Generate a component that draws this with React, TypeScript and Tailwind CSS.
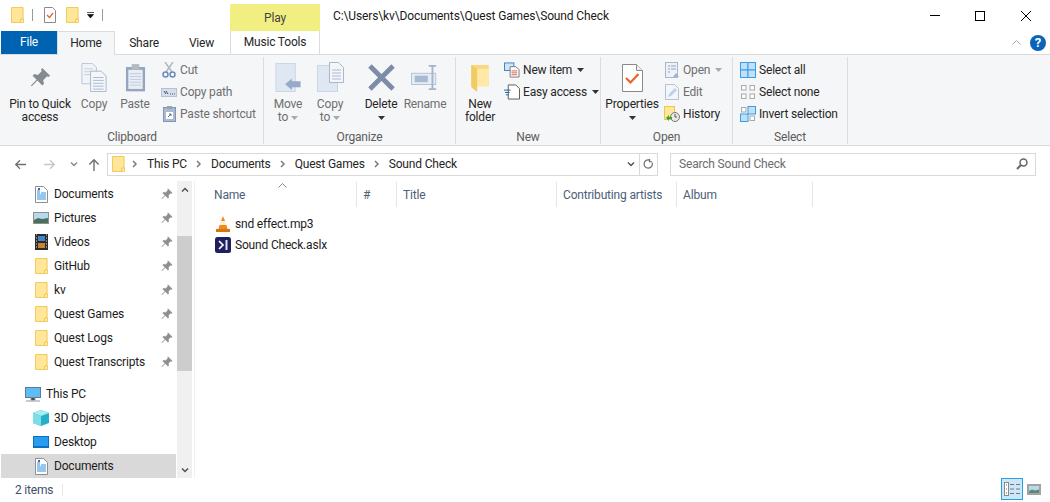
import type { ReactNode } from 'react';

function Folder({ className = 'w-[14px] h-[17px]' }: { className?: string }) {
  return (
    <svg viewBox="0 0 14 17" className={`shrink-0 ${className}`}>
      <path d="M.5.5h12.500v12.500h-2.500v3.500H.5z" fill="#ffe698" stroke="#eec64f" />
      <path d="M10.500 16.500v-3.500h3v3.500z" fill="#fff3c4" stroke="#eec64f" />
    </svg>
  );
}

function Pin({ className = 'w-[12px] h-[12px]', color = '#8d9093' }: { className?: string; color?: string }) {
  return (
    <svg viewBox="0 0 24 24" className={`shrink-0 ${className}`}>
      <path d="M14 1l9 9-2 1.500-1.500-1L15 15l1 4-2 2-5.500-5.500L2 22l-1-1 6.500-6.500L3 10l2-2 4 1 4.500-4.500-1-1.500z" fill={color} />
    </svg>
  );
}

function DocLines({ className = 'w-[13px] h-[17px]' }: { className?: string }) {
  return (
    <svg viewBox="0 0 13 17" className={`shrink-0 ${className}`}>
      <path d="M.5.5h8l4 4v12H.500z" fill="#fff" stroke="#8e8e8e" />
      <path d="M2 5h3M2 7h3M6 7h5M2 9h9M2 11h9M2 13h9" stroke="#2f8fe0" />
      <path d="M3 2h2v2H3z" fill="#2f6fb0" />
    </svg>
  );
}

function Chevron({ dir = 'right', color = '#7b7b7b' }: { dir?: 'right' | 'down' | 'up'; color?: string }) {
  const d = dir === 'right' ? 'M2 1l3 3-3 3' : dir === 'down' ? 'M1 2.500l3 3 3-3' : 'M1 5.500l3-3 3 3';
  return (
    <svg viewBox="0 0 8 8" className="w-[8px] h-[8px] shrink-0">
      <path d={d} fill="none" stroke={color} strokeWidth="1.500" />
    </svg>
  );
}

function Caret({ color = '#444' }: { color?: string }) {
  return (
    <svg viewBox="0 0 7 4" className="w-[7px] h-[4px] shrink-0">
      <path d="M0 0h7L3.500 4z" fill={color} />
    </svg>
  );
}

function BigButton({ icon, label, sub, disabled, caret, width }: { icon: ReactNode; label: string; sub?: ReactNode; disabled?: boolean; caret?: boolean; width: string }) {
  return (
    <div className={`flex flex-col items-center shrink-0 ${width} ${disabled ? 'text-[#6f6f6f]' : 'text-[#262626]'}`}>
      <div className="h-[35px] flex items-end justify-center">{icon}</div>
      <div className="mt-[6px] h-[13px] leading-[13px] whitespace-nowrap">{label}</div>
      {sub && <div className="h-[13px] leading-[13px] whitespace-nowrap flex items-center gap-[3px] justify-center">{sub}</div>}
      {caret && <div className="h-[13px] flex items-center justify-center"><Caret color="#333" /></div>}
    </div>
  );
}

function SmallButton({ icon, label, disabled, caret }: { icon: ReactNode; label: string; disabled?: boolean; caret?: boolean }) {
  return (
    <div className={`h-[22px] flex items-center whitespace-nowrap ${disabled ? 'text-[#6f6f6f]' : 'text-[#262626]'}`}>
      <span className="w-[16px] h-[16px] flex items-center justify-center shrink-0 mr-[3px]">{icon}</span>
      {label}
      {caret && <span className="ml-[5px] flex"><Caret color={disabled ? '#aaa' : '#333'} /></span>}
    </div>
  );
}

function Group({ label, width, children }: { label: string; width: string; children: ReactNode }) {
  return (
    <div className={`shrink-0 flex flex-col h-[87px] mt-[2px] border-r border-[#dcdddf] ${width}`}>
      <div className="flex flex-1 min-h-0">{children}</div>
      <div className="h-[16px] leading-[18px] text-center text-[#5c5c5c]">{label}</div>
    </div>
  );
}

function Grid4({ on }: { on: number[] }) {
  return (
    <svg viewBox="0 0 16 16" className="w-[16px] h-[16px]">
      {[[0, 0], [1, 0], [0, 1], [1, 1]].map(([c, r], i) =>
        on.includes(i) ? (
          <rect key={i} x={c * 7.500 + 0.500} y={r * 7.500 + 0.500} width="7.500" height="7.500" fill="#bfe0f8" stroke="#3a9ce6" />
        ) : (
          <rect key={i} x={c * 8.500 + 1.500} y={r * 8.500 + 1.500} width="4.500" height="4.500" fill="#fff" stroke="#a8a8a8" />
        )
      )}
    </svg>
  );
}

function Ribbon() {
  return (
    <div className="h-[92px] bg-[#f5f6f7] border-y border-[#dadbdc] flex pl-[1px] text-[#262626]">
      <Group label="Clipboard" width="w-[263px]">
        <BigButton
          width="w-[78px]"
          label="Pin to Quick"
          sub="access"
          icon={<Pin className="w-[21px] h-[21px] mb-[4px]" color="#868b90" />}
        />
        <BigButton
          width="w-[30px]"
          disabled
          label="Copy"
          icon={
            <svg viewBox="0 0 26 30" className="w-[26px] h-[29px]">
              <path d="M.5.5h11l4 4v17H.5z" fill="#f0f3f8" stroke="#bac6d8" />
              <path d="M3 6h9M3 9h9M3 12h9" stroke="#c3cede" />
              <path d="M9.500 8.500h11l5 5v16h-16z" fill="#f4f6fa" stroke="#aab8cc" />
              <path d="M12 15h11M12 18h11M12 21h11M12 24h11M12 27h11" stroke="#a9bad2" />
            </svg>
          }
        />
        <BigButton
          width="w-[52px]"
          disabled
          label="Paste"
          icon={
            <svg viewBox="0 0 22 30" className="w-[21px] h-[29px]">
              <rect x="1" y="4" width="20" height="25.500" fill="#95a6bf" />
              <rect x="3.500" y="7" width="15" height="20" fill="#e9eef6" />
              <path d="M5 11h12M5 14h12M5 17h12M5 20h12M5 23h12" stroke="#c0cbdc" />
              <rect x="7" y="1" width="8" height="6" fill="#b4b9c0" />
            </svg>
          }
        />
        <div className="flex flex-col pt-[2px]">
          <SmallButton
            disabled
            label="Cut"
            icon={
              <svg viewBox="0 0 14 16" className="w-[14px] h-[16px]">
                <path d="M3 0l7 10M11 0L4 10" stroke="#b2b8c0" strokeWidth="1.500" />
                <circle cx="3.500" cy="12.500" r="2.500" fill="none" stroke="#6f8cb8" strokeWidth="1.500" />
                <circle cx="10.500" cy="12.500" r="2.500" fill="none" stroke="#6f8cb8" strokeWidth="1.500" />
              </svg>
            }
          />
          <SmallButton
            disabled
            label="Copy path"
            icon={
              <svg viewBox="0 0 16 9" className="w-[16px] h-[9px]">
                <rect x=".5" y=".5" width="15" height="8" fill="#d5deec" stroke="#b6c2d4" />
                <path d="M3 3l2 3M5 3l2 3M9 6h1M11 6h1M13 6h1" stroke="#4a5666" />
              </svg>
            }
          />
          <SmallButton
            disabled
            label="Paste shortcut"
            icon={
              <svg viewBox="0 0 13 16" className="w-[13px] h-[16px]">
                <rect x=".5" y="1.500" width="12" height="14" fill="#a9bad2" stroke="#8294ae" />
                <rect x="4" y="0" width="5" height="3" fill="#9aa2ad" />
                <path d="M3 6h7v7H3z" fill="#fff" />
                <path d="M5 11l3-3M6 8h2v2" stroke="#5b6a80" fill="none" />
              </svg>
            }
          />
        </div>
      </Group>
      <Group label="Organize" width="w-[192px]">
        <BigButton
          width="w-[48px]"
          disabled
          label="Move"
          sub={<>to <Caret color="#aaa" /></>}
          icon={
            <svg viewBox="0 0 27 30" className="w-[27px] h-[29px]">
              <rect x=".5" y=".5" width="20" height="29" fill="#dfe7f2" stroke="#cbd6e6" />
              <path d="M10 22l7-6v3h9v6h-9v3z" fill="#97abc9" />
            </svg>
          }
        />
        <BigButton
          width="w-[36px]"
          disabled
          label="Copy"
          sub={<>to <Caret color="#aaa" /></>}
          icon={
            <svg viewBox="0 0 27 30" className="w-[27px] h-[30px]">
              <rect x=".5" y="3.500" width="20" height="26" fill="#dfe7f2" stroke="#cbd6e6" />
              <path d="M12.500.5h9l5 5v15h-14z" fill="#f4f6fa" stroke="#aab8cc" />
              <path d="M15 8h9M15 11h9M15 14h9M15 17h9" stroke="#a9bad2" />
            </svg>
          }
        />
        <div className="ml-[6px] flex">
          <BigButton
            width="w-[54px]"
            label="Delete"
            caret
            icon={
              <svg viewBox="0 0 28 28" className="w-[27px] h-[27px] mb-[1px]">
                <path d="M2 2l24 24M26 2L2 26" stroke="#7d8ca8" strokeWidth="5" />
              </svg>
            }
          />
        </div>
        <div className="ml-[-3px] flex">
          <BigButton
            width="w-[40px]"
            disabled
            label="Rename"
            icon={
              <svg viewBox="0 0 30 28" className="w-[28px] h-[27px] mb-[1px]">
                <rect x=".5" y="9.500" width="26" height="12" fill="#e6ecf5" stroke="#b4c1d4" />
                <rect x="4" y="12" width="14" height="7" fill="#a8b9d2" />
                <path d="M19 1.500h8M19 26.500h8M23 1.500v25" stroke="#a4b4cb" strokeWidth="2" />
              </svg>
            }
          />
        </div>
      </Group>
      <Group label="New" width="w-[145px]">
        <BigButton
          width="w-[48px]"
          label="New"
          sub="folder"
          icon={
            <svg viewBox="0 0 18 28" className="w-[18px] h-[27px]">
              <path d="M0 0h18v22H0z" fill="#fbd77f" />
              <path d="M6 4h12v18H6z" fill="#ffe9a8" />
              <path d="M0 0l6 4v24l-6-5z" fill="#f2cb63" />
            </svg>
          }
        />
        <div className="flex flex-col pt-[2px]">
          <SmallButton
            label="New item"
            caret
            icon={
              <svg viewBox="0 0 17 16" className="w-[17px] h-[16px]">
                <rect x=".5" y=".5" width="10" height="8" fill="#cfe6fa" stroke="#3b7fc0" />
                <path d="M6.500 4.500h6l3.500 3v8h-9.500z" fill="#fff" stroke="#777" />
                <path d="M8 9h6M8 11h6M8 13h6" stroke="#d65c4a" />
              </svg>
            }
          />
          <SmallButton
            label="Easy access"
            caret
            icon={
              <svg viewBox="0 0 17 16" className="w-[17px] h-[16px]">
                <path d="M4.500.5h8l4 4v11h-12z" fill="#fff" stroke="#555" />
                <path d="M0 6h7M1 8.500h5M2 11h3" stroke="#1e5f9e" strokeWidth="1" />
              </svg>
            }
          />
        </div>
      </Group>
      <Group label="Open" width="w-[132px]">
        <BigButton
          width="w-[62px]"
          label="Properties"
          caret
          icon={
            <svg viewBox="0 0 21 28" className="w-[21px] h-[28px]">
              <path d="M.5.5h14l6 6v21H.5z" fill="#fff" stroke="#8a8a8a" />
              <path d="M14.500.5v6h6" fill="#eee" stroke="#8a8a8a" />
              <path d="M4 14l4.500 4.500L16.500 10" fill="none" stroke="#e8622a" strokeWidth="2.200" />
            </svg>
          }
        />
        <div className="flex flex-col pt-[2px] ml-[1px]">
          <SmallButton
            disabled
            label="Open"
            caret
            icon={
              <svg viewBox="0 0 15 16" className="w-[15px] h-[16px]">
                <rect x=".5" y=".5" width="12" height="15" fill="#eef2f8" stroke="#aab8cc" />
                <path d="M3 4h2M3 7h2M3 10h2M6 4h5M6 7h5" stroke="#8ea2c0" />
                <path d="M8 15l3-4 3 4z" fill="#9fb2cf" />
              </svg>
            }
          />
          <SmallButton
            disabled
            label="Edit"
            icon={
              <svg viewBox="0 0 14 16" className="w-[14px] h-[16px]">
                <path d="M.5.5h9l4 4v11H.5z" fill="#f4f6fa" stroke="#b4c1d4" />
                <path d="M3 13l1-3 6-6 2 2-6 6z" fill="#bdd0e8" />
              </svg>
            }
          />
          <SmallButton
            label="History"
            icon={
              <svg viewBox="0 0 16 16" className="w-[16px] h-[16px]">
                <rect x=".5" y=".5" width="10" height="13" fill="#ffe698" stroke="#eec64f" />
                <circle cx="11" cy="11" r="4.500" fill="#e8e8e8" stroke="#777" />
                <path d="M11 8v3h2" stroke="#555" fill="none" />
                <path d="M2 12l3-3v2h3v2H5v2z" fill="#3aa535" />
              </svg>
            }
          />
        </div>
      </Group>
      <Group label="Select" width="w-[115px]">
        <div className="flex flex-col pt-[2px] pl-[7px]">
          <SmallButton label="Select all" icon={<Grid4 on={[0, 1, 2, 3]} />} />
          <SmallButton label="Select none" icon={<Grid4 on={[]} />} />
          <SmallButton label="Invert selection" icon={<Grid4 on={[1, 2]} />} />
        </div>
      </Group>
    </div>
  );
}

function TitleBar() {
  return (
    <div className="h-[31px] flex items-start text-[#1a1a1a]">
      <div className="flex items-center h-[30px] pl-[11px] w-[230px]">
        <Folder className="w-[13px] h-[16px]" />
        <span className="ml-[8px] w-px h-[12px] bg-[#9a9a9a]" />
        <svg viewBox="0 0 12 16" className="ml-[11px] w-[12px] h-[16px]">
          <path d="M.5.5h8l3 3v12H.5z" fill="#fff" stroke="#8a8a8a" />
          <path d="M3 8l2.500 2.500L9 6" fill="none" stroke="#e8622a" strokeWidth="1.300" />
        </svg>
        <span className="ml-[10px]"><Folder className="w-[13px] h-[16px]" /></span>
        <svg viewBox="0 0 7 6" className="ml-[8px] w-[7px] h-[6px]">
          <path d="M0 .5h7M.5 2.500h6L3.500 6z" stroke="#111" strokeWidth=".7" fill="#111" />
        </svg>
        <span className="ml-[8px] w-px h-[12px] bg-[#9a9a9a]" />
      </div>
      <div className="mt-[4px] w-[90px] h-[27px] bg-[#f2ef82] text-center leading-[28px] text-[#444]">Play</div>
      <div className="ml-[13px] h-[31px] leading-[32px] whitespace-nowrap tracking-[-0.12px]">C:\Users\kv\Documents\Quest Games\Sound Check</div>
      <div className="ml-auto flex items-center h-[31px] pr-[19px]">
        <span className="w-[10px] h-px bg-black" />
        <span className="ml-[35px] w-[10px] h-[10px] border border-black" />
        <svg viewBox="0 0 10 10" className="ml-[36px] w-[10px] h-[10px]">
          <path d="M0 0l10 10M10 0L0 10" stroke="#000" />
        </svg>
      </div>
    </div>
  );
}

function TabRow() {
  return (
    <div className="h-[23px] flex items-center text-[#262626] relative z-10">
      <div className="ml-[1px] w-[56px] h-[23px] bg-[#0063b1] text-white text-center leading-[23px]">File</div>
      <div className="w-[58px] h-[24px] self-start bg-[#f5f6f7] border-x border-t border-[#dadbdc] text-center leading-[23px]">Home</div>
      <div className="w-[58px] text-center">Share</div>
      <div className="w-[57px] text-center">View</div>
      <div className="w-[90px] h-[23px] border-x border-[#dadbdc] text-center leading-[23px]">Music Tools</div>
      <div className="ml-auto flex items-center pr-[4px] gap-[9px]">
        <svg viewBox="0 0 9 5" className="w-[9px] h-[5px]">
          <path d="M.5 4.500l4-4 4 4" fill="none" stroke="#a8a8a8" />
        </svg>
        <span className="w-[16px] h-[16px] rounded-full bg-[#0a63b8] text-white text-center text-[13px] leading-[16px] font-bold">?</span>
      </div>
    </div>
  );
}

function AddressBar() {
  const crumbs = ['This PC', 'Documents', 'Quest Games', 'Sound Check'];
  return (
    <div className="h-[35px] pt-[1px] flex items-center text-[#262626]">
      <svg viewBox="0 0 14 12" className="ml-[14px] w-[12px] h-[11px]">
        <path d="M14 6H2M7 1L2 6l5 5" fill="none" stroke="#6f6f6f" strokeWidth="1.500" />
      </svg>
      <svg viewBox="0 0 14 12" className="ml-[18px] w-[12px] h-[11px]">
        <path d="M0 6h12M7 1l5 5-5 5" fill="none" stroke="#c6c6c6" strokeWidth="1.500" />
      </svg>
      <span className="ml-[14px] flex"><Chevron dir="down" color="#8a8a8a" /></span>
      <svg viewBox="0 0 12 14" className="ml-[10px] w-[12px] h-[13px]">
        <path d="M6 14V2M1 7l5-5 5 5" fill="none" stroke="#6f6f6f" strokeWidth="1.500" />
      </svg>
      <div className="ml-[7px] w-[551px] h-[23px] border border-[#d9d9d9] flex items-center pl-[4px]">
        <Folder className="w-[13px] h-[16px]" />
        <span className="ml-[6px] mr-[8px] flex"><Chevron /></span>
        {crumbs.map((c, i) => (
          <span key={c} className="flex items-center whitespace-nowrap">
            {c}
            {i < crumbs.length - 1 && <span className="mx-[8px] flex"><Chevron /></span>}
          </span>
        ))}
        <span className="ml-auto mr-[4px] flex"><Chevron dir="down" color="#555" /></span>
        <span className="w-[18px] h-[21px] border-l border-[#d9d9d9] flex items-center justify-center">
          <svg viewBox="0 0 12 12" className="w-[11px] h-[11px]">
            <path d="M10 4a4.500 4.500 0 1 1-2-2.500M7 0v3h3" fill="none" stroke="#6f6f6f" strokeWidth="1.300" />
          </svg>
        </span>
      </div>
      <div className="ml-[12px] w-[366px] h-[23px] border border-[#d9d9d9] flex items-center pl-[8px] pr-[7px] text-[#6d6d6d]">
        Search Sound Check
        <svg viewBox="0 0 12 12" className="ml-auto w-[12px] h-[12px]">
          <circle cx="7.500" cy="4.500" r="3.500" fill="none" stroke="#666" strokeWidth="1.500" />
          <path d="M5 7l-4 4" stroke="#666" strokeWidth="2" />
        </svg>
      </div>
    </div>
  );
}

const pinned = ['GitHub', 'kv', 'Quest Games', 'Quest Logs', 'Quest Transcripts'];

function NavRow({ icon, label, pin, selected, indent = 'pl-[32px]' }: { icon: ReactNode; label: string; pin?: boolean; selected?: boolean; indent?: string }) {
  return (
    <div className={`h-[24px] flex items-center ${indent} pr-[3px] ${selected ? 'bg-[#d9d9d9]' : ''}`}>
      <span className="w-[16px] h-[17px] flex items-center justify-center shrink-0">{icon}</span>
      <span className="ml-[5px] whitespace-nowrap text-[#1c1c1c]">{label}</span>
      {pin && <span className="ml-auto flex"><Pin className="w-[12px] h-[12px]" /></span>}
    </div>
  );
}

function Sidebar() {
  return (
    <div className="w-[195px] shrink-0 flex border-r border-[#f0f0f0]">
      <div className="ml-[1px] w-[175px] shrink-0 flex flex-col pt-[1px]">
        <NavRow icon={<DocLines />} label="Documents" pin />
        <NavRow
          label="Pictures"
          pin
          icon={
            <svg viewBox="0 0 16 12" className="w-[16px] h-[12px]">
              <rect x=".5" y=".5" width="15" height="11" fill="#b8d8ee" stroke="#8f8f8f" />
              <path d="M1 8l4-2 4 1 6-1v5H1z" fill="#47705a" />
            </svg>
          }
        />
        <NavRow
          label="Videos"
          pin
          icon={
            <svg viewBox="0 0 13 16" className="w-[13px] h-[16px]">
              <rect width="13" height="16" fill="#2a2a2a" />
              <rect x="3" y="2" width="7" height="5" fill="#3f86c8" />
              <rect x="3" y="9" width="7" height="5" fill="#c9822d" />
              <path d="M1 1h1M1 4h1M1 7h1M1 10h1M1 13h1M11 1h1M11 4h1M11 7h1M11 10h1M11 13h1" stroke="#ddd" />
            </svg>
          }
        />
        {pinned.map(p => (
          <NavRow key={p} icon={<Folder className="w-[13px] h-[16px]" />} label={p} pin />
        ))}
        <div className="h-[8px]" />
        <NavRow
          indent="pl-[24px]"
          label="This PC"
          icon={
            <svg viewBox="0 0 16 15" className="w-[16px] h-[15px]">
              <rect x=".5" y=".5" width="15" height="10" fill="#5cbcf5" stroke="#62798f" />
              <path d="M6 11h4v2H6zM1 14h14" stroke="#8a9aa8" />
            </svg>
          }
        />
        <NavRow
          label="3D Objects"
          icon={
            <svg viewBox="0 0 16 16" className="w-[16px] h-[16px]">
              <path d="M8 0l8 3v10l-8 3-8-3V3z" fill="#24b0c8" />
              <path d="M8 0l8 3-8 3-8-3z" fill="#a8ecf0" />
              <path d="M0 3l8 3v10l-8-3z" fill="#7fdde6" />
            </svg>
          }
        />
        <NavRow
          label="Desktop"
          icon={
            <svg viewBox="0 0 16 12" className="w-[16px] h-[12px]">
              <rect width="16" height="12" fill="#0b6fc4" />
              <rect x="1" y="1" width="14" height="9" fill="#2a9cf0" />
            </svg>
          }
        />
        <NavRow icon={<DocLines />} label="Documents" selected />
      </div>
      <div className="w-[15px] ml-[1px] bg-[#f0f0f0] flex flex-col items-center">
        <div className="h-[17px] flex items-center justify-center"><Chevron dir="up" color="#505050" /></div>
        <div className="mt-[38px] h-[135px] w-full bg-[#cdcdcd]" />
        <div className="mt-auto h-[17px] flex items-center justify-center"><Chevron dir="down" color="#505050" /></div>
      </div>
    </div>
  );
}

const cols = [
  { label: 'Name', width: 'w-[162px] pl-[19px]' },
  { label: '#', width: 'w-[40px] pl-[6px]' },
  { label: 'Title', width: 'w-[160px] pl-[6px]' },
  { label: 'Contributing artists', width: 'w-[120px] pl-[6px]' },
  { label: 'Album', width: 'w-[136px] pl-[6px]' }
];

function FileList() {
  return (
    <div className="flex-1 min-w-0 flex flex-col pt-[1px]">
      <div className="h-[25px] flex relative text-[#4c607a]">
        {cols.map(c => (
          <div key={c.label} className={`${c.width} h-[25px] leading-[27px] border-r border-[#e5e5e5] whitespace-nowrap shrink-0`}>
            {c.label}
          </div>
        ))}
        <svg viewBox="0 0 9 5" className="absolute left-[83px] top-[1px] w-[9px] h-[5px]">
          <path d="M.5 4.500l4-4 4 4" fill="none" stroke="#8a8a8a" />
        </svg>
      </div>
      <div className="pl-[20px] pt-[6px] text-[#1c1c1c]">
        <div className="h-[21px] flex items-center">
          <svg viewBox="0 0 16 16" className="w-[16px] h-[16px] shrink-0">
            <path d="M8 0l2 5H6z" fill="#f08a1d" />
            <path d="M5.700 5h4.600l1 4H4.700z" fill="#f6f0e4" />
            <path d="M4.500 9h7l1 4H3.500z" fill="#f08a1d" />
            <path d="M1 13h14v3H1z" fill="#d9730f" />
          </svg>
          <span className="ml-[4px]">snd effect.mp3</span>
        </div>
        <div className="h-[21px] flex items-center">
          <svg viewBox="0 0 16 16" className="w-[16px] h-[16px] shrink-0">
            <rect width="16" height="16" rx="2.500" fill="#1d1f5e" />
            <path d="M4 4l4 4-4 4" fill="none" stroke="#fff" strokeWidth="1.700" />
            <path d="M11.500 3v10" stroke="#dfe3f5" strokeWidth="2" />
          </svg>
          <span className="ml-[4px]">Sound Check.aslx</span>
        </div>
      </div>
    </div>
  );
}

function StatusBar() {
  return (
    <div className="h-[24px] flex items-center text-[#3f4f68]">
      <div className="ml-[15px] w-[48px] h-[12px] leading-[12px] border-r border-[#e8e8e8]">2 items</div>
      <div className="ml-auto mr-[9px] flex items-center">
        <div className="w-[22px] h-[22px] mt-[-2px] bg-[#cce8f8] border border-[#26a0e0] flex items-center justify-center">
          <svg viewBox="0 0 16 14" className="w-[16px] h-[14px]">
            <rect x=".5" y=".5" width="4" height="13" fill="#fff" stroke="#8a8a8a" />
            <path d="M2 3h1M2 7h1M2 11h1" stroke="#666" />
            <path d="M6 2.500h4M12 2.500h4M6 7h4M12 7h4M6 11.500h4M12 11.500h4" stroke="#777" />
          </svg>
        </div>
        <svg viewBox="0 0 14 11" className="ml-[4px] mt-[-1px] w-[14px] h-[11px]">
          <rect x="1" y="1" width="12" height="9" fill="#b8d8ee" stroke="#a3a3a3" strokeWidth="2" />
          <path d="M2 7l3-1.500 3 1 4-1v3.500H2z" fill="#5b8a70" />
        </svg>
      </div>
    </div>
  );
}

export default function App() {
  return (
    <div className="w-[1050px] h-[502px] bg-white flex flex-col overflow-hidden font-['Roboto',sans-serif] text-[12px] tracking-[-0.18px]">
      <TitleBar />
      <TabRow />
      <Ribbon />
      <AddressBar />
      <div className="h-[297px] flex">
        <Sidebar />
        <FileList />
      </div>
      <StatusBar />
    </div>
  );
}
